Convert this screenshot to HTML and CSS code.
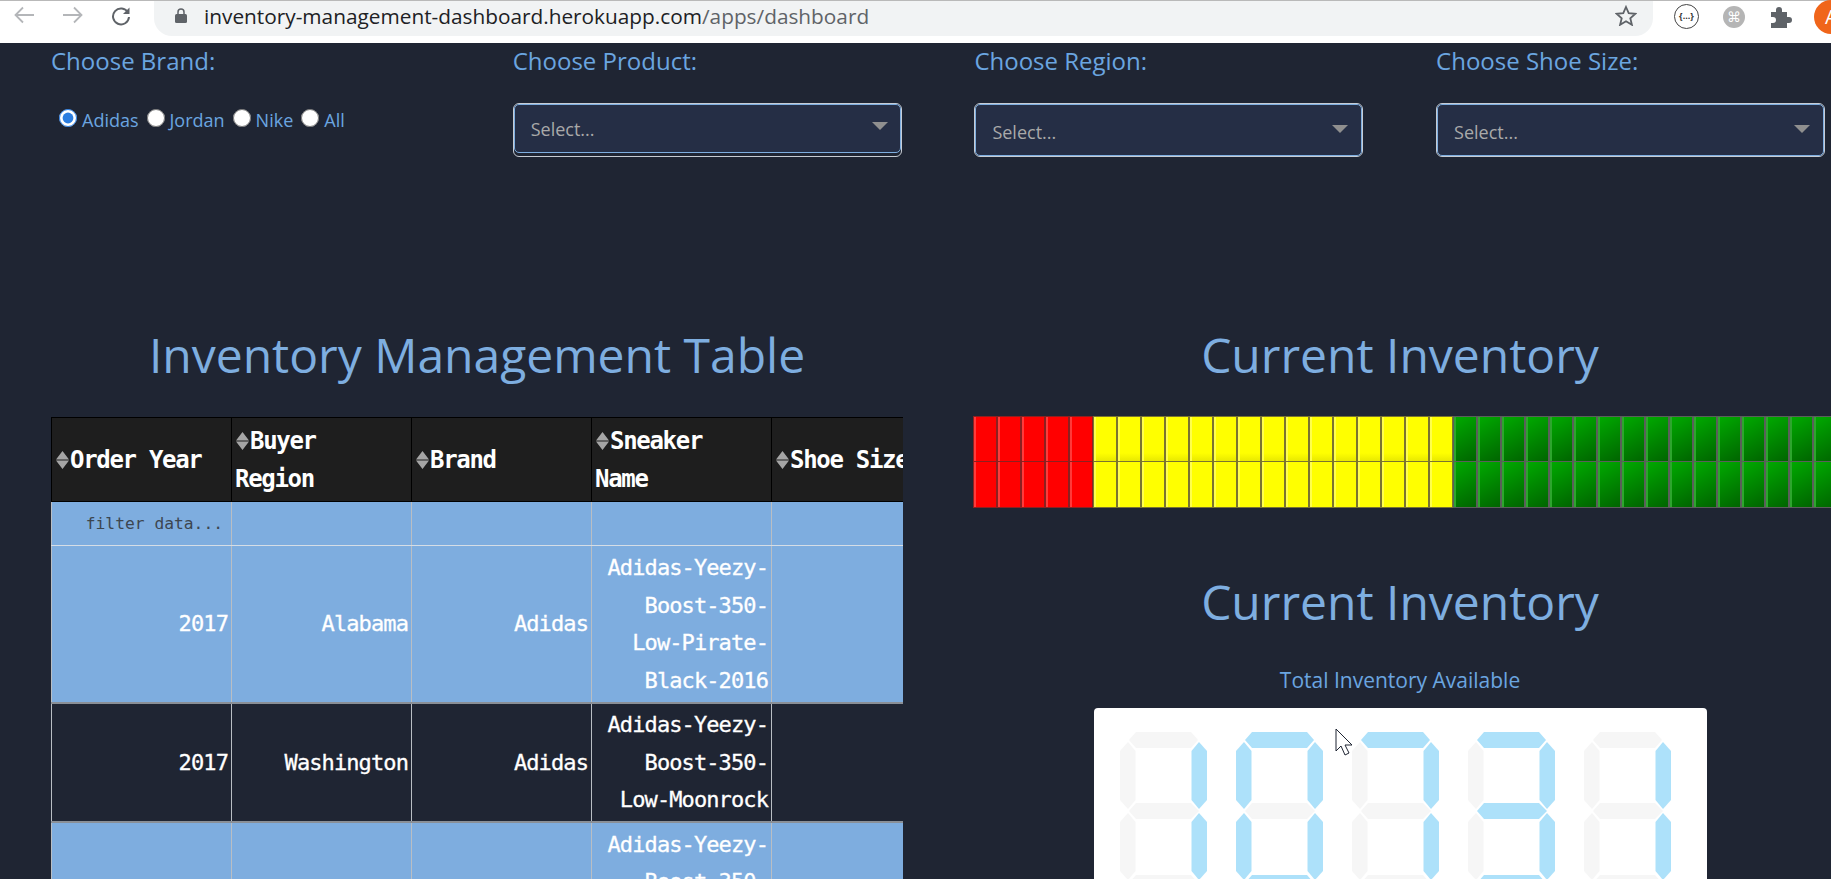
FILE: index.html
```html
<!DOCTYPE html>
<html lang="en">
<head>
  <meta charset="UTF-8">
  <meta name="viewport" content="width=device-width, initial-scale=1.0">
  <title>Inventory Management Dashboard</title>
  <link rel="stylesheet" href="styles.css">
</head>
<body>

<!-- browser toolbar -->
<div class="toolbar">
  <div class="nav-icons">
    <svg width="22" height="18" viewBox="0 0 22 18"><path d="M21 9H3M10 1.5 2.5 9l7.5 7.5" class="nav-off"/></svg>
    <svg width="22" height="18" viewBox="0 0 22 18"><path d="M1 9h18M12 1.5 19.500 9 12 16.500" class="nav-off"/></svg>
    <svg width="20" height="20" viewBox="0 0 20 20"><path d="M17 6.500A8 8 0 1 0 18 11" class="nav-on"/><path d="M18.500 1.500v6.500H12z" fill="#5f6368"/></svg>
  </div>
  <div class="omnibox">
    <svg class="lock" width="12" height="15" viewBox="0 0 12 15"><path d="M3 6V4a3 3 0 0 1 6 0v2" fill="none" stroke="#5f6368" stroke-width="1.500"/><rect y="6" width="12" height="9" rx="1.500" fill="#5f6368"/></svg>
    <span class="url">inventory-management-dashboard.herokuapp.com<span class="url-path">/apps/dashboard</span></span>
    <svg class="star" width="22" height="21" viewBox="0 0 22 21"><path d="M11 2l2.700 6.200 6.700.6-5.100 4.400 1.600 6.600L11 16.300 5.100 19.800l1.600-6.600L1.600 8.800l6.700-.6z" fill="none" stroke="#5f6368" stroke-width="1.800"/></svg>
  </div>
  <div class="ext-icons">
    <span class="ext-code">{...}</span>
    <span class="ext-cmd">⌘</span>
    <svg width="24" height="22" viewBox="0 0 24 22"><path d="M2 6h5V4a3 3 0 0 1 6 0v2h5v5h2a3 3 0 0 1 0 6h-2v5H2v-5h2a3 3 0 0 0 0-6H2z" fill="#5f6368"/></svg>
    <span class="avatar">A</span>
  </div>
</div>

<div class="page">
  <div class="filters">
    <div class="filter">
      <label class="filter-label">Choose Brand:</label>
      <div class="radios">
        <label><input type="radio" name="brand" checked>Adidas</label>
        <label><input type="radio" name="brand">Jordan</label>
        <label><input type="radio" name="brand">Nike</label>
        <label><input type="radio" name="brand">All</label>
      </div>
    </div>
    <div class="filter">
      <label class="filter-label">Choose Product:</label>
      <div class="select select-open">
        <div class="select-inner"><span>Select...</span><i class="caret"></i></div>
      </div>
    </div>
    <div class="filter">
      <label class="filter-label">Choose Region:</label>
      <div class="select">
        <div class="select-inner"><span>Select...</span><i class="caret"></i></div>
      </div>
    </div>
    <div class="filter">
      <label class="filter-label">Choose Shoe Size:</label>
      <div class="select">
        <div class="select-inner"><span>Select...</span><i class="caret"></i></div>
      </div>
    </div>
  </div>

  <div class="columns">
    <div class="col-left">
      <h1>Inventory Management Table</h1>
      <div class="table-wrap">
        <table>
          <thead>
            <tr>
              <th><svg class="sort" viewBox="0 0 13 18"><path d="M6.500 0 13 8.500H0zM0 9.500h13L6.500 18z"/></svg>Order Year</th>
              <th><svg class="sort" viewBox="0 0 13 18"><path d="M6.500 0 13 8.500H0zM0 9.500h13L6.500 18z"/></svg>Buyer Region</th>
              <th><svg class="sort" viewBox="0 0 13 18"><path d="M6.500 0 13 8.500H0zM0 9.500h13L6.500 18z"/></svg>Brand</th>
              <th><svg class="sort" viewBox="0 0 13 18"><path d="M6.500 0 13 8.500H0zM0 9.500h13L6.500 18z"/></svg>Sneaker Name</th>
              <th><svg class="sort" viewBox="0 0 13 18"><path d="M6.500 0 13 8.500H0zM0 9.500h13L6.500 18z"/></svg>Shoe Size</th>
            </tr>
          </thead>
          <tbody>
            <tr class="filter-row">
              <td><input type="text" placeholder="filter data..."></td>
              <td></td><td></td><td></td><td></td>
            </tr>
            <tr class="row-light">
              <td>2017</td><td>Alabama</td><td>Adidas</td><td>Adidas-Yeezy-Boost-350-Low-Pirate-Black-2016</td><td></td>
            </tr>
            <tr class="row-dark">
              <td>2017</td><td>Washington</td><td>Adidas</td><td>Adidas-Yeezy-Boost-350-Low-Moonrock</td><td></td>
            </tr>
            <tr class="row-light">
              <td></td><td></td><td></td><td>Adidas-Yeezy-Boost-350-Low-Moonrock</td><td></td>
            </tr>
          </tbody>
        </table>
      </div>
    </div>

    <div class="col-right">
      <h1>Current Inventory</h1>
      <div class="led-bar">
        <div class="led-row">
          <i class="led red"></i><i class="led red"></i><i class="led red"></i><i class="led red"></i><i class="led red"></i>
          <i class="led yellow"></i><i class="led yellow"></i><i class="led yellow"></i><i class="led yellow"></i><i class="led yellow"></i>
          <i class="led yellow"></i><i class="led yellow"></i><i class="led yellow"></i><i class="led yellow"></i><i class="led yellow"></i>
          <i class="led yellow"></i><i class="led yellow"></i><i class="led yellow"></i><i class="led yellow"></i><i class="led yellow"></i>
          <i class="led green"></i><i class="led green"></i><i class="led green"></i><i class="led green"></i><i class="led green"></i>
          <i class="led green"></i><i class="led green"></i><i class="led green"></i><i class="led green"></i><i class="led green"></i>
          <i class="led green"></i><i class="led green"></i><i class="led green"></i><i class="led green"></i><i class="led green"></i>
          <i class="led green"></i>
        </div>
        <div class="led-row">
          <i class="led red"></i><i class="led red"></i><i class="led red"></i><i class="led red"></i><i class="led red"></i>
          <i class="led yellow"></i><i class="led yellow"></i><i class="led yellow"></i><i class="led yellow"></i><i class="led yellow"></i>
          <i class="led yellow"></i><i class="led yellow"></i><i class="led yellow"></i><i class="led yellow"></i><i class="led yellow"></i>
          <i class="led yellow"></i><i class="led yellow"></i><i class="led yellow"></i><i class="led yellow"></i><i class="led yellow"></i>
          <i class="led green"></i><i class="led green"></i><i class="led green"></i><i class="led green"></i><i class="led green"></i>
          <i class="led green"></i><i class="led green"></i><i class="led green"></i><i class="led green"></i><i class="led green"></i>
          <i class="led green"></i><i class="led green"></i><i class="led green"></i><i class="led green"></i><i class="led green"></i>
          <i class="led green"></i>
        </div>
      </div>

      <h1 class="second-title">Current Inventory</h1>
      <div class="total-label">Total Inventory Available</div>
      <div class="display">
        <!-- 7 segments per digit: top, top-left, top-right, middle, bottom-left, bottom-right, bottom -->
        <svg class="digit" viewBox="0 0 87 159">
          <polygon points="16,0 71,0 78,8 71,16 16,16 9,8"/>
          <polygon points="8,10 15.500,19 15.500,68 8,77 0,68 0,19"/>
          <polygon class="on" points="79,10 87,19 87,68 79,77 71.500,68 71.500,19"/>
          <polygon points="16,71 71,71 79,79 71,87 16,87 9,79"/>
          <polygon points="8,81 15.500,90 15.500,139 8,148 0,139 0,90"/>
          <polygon class="on" points="79,81 87,90 87,139 79,148 71.500,139 71.500,90"/>
          <polygon points="16,143 71,143 78,151 71,159 16,159 9,151"/>
        </svg>
        <svg class="digit" viewBox="0 0 87 159">
          <polygon class="on" points="16,0 71,0 78,8 71,16 16,16 9,8"/>
          <polygon class="on" points="8,10 15.500,19 15.500,68 8,77 0,68 0,19"/>
          <polygon class="on" points="79,10 87,19 87,68 79,77 71.500,68 71.500,19"/>
          <polygon points="16,71 71,71 79,79 71,87 16,87 9,79"/>
          <polygon class="on" points="8,81 15.500,90 15.500,139 8,148 0,139 0,90"/>
          <polygon class="on" points="79,81 87,90 87,139 79,148 71.500,139 71.500,90"/>
          <polygon class="on" points="16,143 71,143 78,151 71,159 16,159 9,151"/>
        </svg>
        <svg class="digit" viewBox="0 0 87 159">
          <polygon class="on" points="16,0 71,0 78,8 71,16 16,16 9,8"/>
          <polygon points="8,10 15.500,19 15.500,68 8,77 0,68 0,19"/>
          <polygon class="on" points="79,10 87,19 87,68 79,77 71.500,68 71.500,19"/>
          <polygon points="16,71 71,71 79,79 71,87 16,87 9,79"/>
          <polygon points="8,81 15.500,90 15.500,139 8,148 0,139 0,90"/>
          <polygon class="on" points="79,81 87,90 87,139 79,148 71.500,139 71.500,90"/>
          <polygon points="16,143 71,143 78,151 71,159 16,159 9,151"/>
        </svg>
        <svg class="digit" viewBox="0 0 87 159">
          <polygon class="on" points="16,0 71,0 78,8 71,16 16,16 9,8"/>
          <polygon points="8,10 15.500,19 15.500,68 8,77 0,68 0,19"/>
          <polygon class="on" points="79,10 87,19 87,68 79,77 71.500,68 71.500,19"/>
          <polygon class="on" points="16,71 71,71 79,79 71,87 16,87 9,79"/>
          <polygon points="8,81 15.500,90 15.500,139 8,148 0,139 0,90"/>
          <polygon class="on" points="79,81 87,90 87,139 79,148 71.500,139 71.500,90"/>
          <polygon class="on" points="16,143 71,143 78,151 71,159 16,159 9,151"/>
        </svg>
        <svg class="digit" viewBox="0 0 87 159">
          <polygon points="16,0 71,0 78,8 71,16 16,16 9,8"/>
          <polygon points="8,10 15.500,19 15.500,68 8,77 0,68 0,19"/>
          <polygon class="on" points="79,10 87,19 87,68 79,77 71.500,68 71.500,19"/>
          <polygon points="16,71 71,71 79,79 71,87 16,87 9,79"/>
          <polygon points="8,81 15.500,90 15.500,139 8,148 0,139 0,90"/>
          <polygon class="on" points="79,81 87,90 87,139 79,148 71.500,139 71.500,90"/>
          <polygon points="16,143 71,143 78,151 71,159 16,159 9,151"/>
        </svg>
      </div>
    </div>
  </div>
</div>

<!-- mouse pointer caught in the screenshot -->
<svg class="pointer" width="19" height="28" viewBox="0 0 19 28"><path d="M1 1v22l5-5 4 9 4-2-4-8h7z" fill="#fff" stroke="#1f2533" stroke-width="1"/></svg>

</body>
</html>
```

FILE: styles.css
```css
* {
  box-sizing: border-box;
}

html, body {
  height: 100%;
}

body {
  margin: 0;
  overflow: hidden;
  background-color: #1f2533;
  font-family: "Open Sans", "Noto Sans", sans-serif;
  color: #7eaee0;
}

/* browser toolbar */
.toolbar {
  height: 43px;
  display: flex;
  background: #fff;
  border-top: 1px solid #b9b9b9;
}

.nav-icons {
  width: 154px;
  flex: none;
  display: flex;
  align-items: flex-start;
  gap: 27px;
  padding: 5px 0 0 13px;
}

.nav-icons svg {
  flex: none;
}

.nav-off {
  fill: none;
  stroke: #b4b6b9;
  stroke-width: 1.8;
}

.nav-on {
  fill: none;
  stroke: #5f6368;
  stroke-width: 2;
}

.omnibox {
  width: 1499px;
  height: 35px;
  flex: none;
  display: flex;
  align-items: center;
  background: #f1f3f4;
  border-radius: 0 0 18px 18px;
  padding: 0 16px 6px 21px;
}

.lock {
  flex: none;
  margin-right: 17px;
}

.url {
  flex: 1;
  font-size: 20.800px;
  color: #202124;
  white-space: nowrap;
}

.url-path {
  color: #5f6368;
}

.star {
  flex: none;
}

.ext-icons {
  flex: 1;
  display: flex;
  align-items: center;
  height: 31px;
  padding-left: 21px;
  gap: 24px;
}

.ext-code {
  width: 25px;
  height: 25px;
  flex: none;
  border: 1.500px solid #444;
  border-radius: 50%;
  font-size: 9px;
  font-weight: 700;
  line-height: 21px;
  text-align: center;
  color: #333;
}

.ext-cmd {
  width: 22px;
  height: 22px;
  flex: none;
  border-radius: 50%;
  background: #b5b5b5;
  color: #fff;
  font-family: "DejaVu Sans", sans-serif;
  font-size: 14px;
  line-height: 22px;
  text-align: center;
}

.ext-icons svg {
  flex: none;
}

.avatar {
  width: 34px;
  height: 34px;
  flex: none;
  margin: 0 0 0 -3px;
  border-radius: 50%;
  background: #f0651a;
  color: #fff;
  font-size: 20px;
  line-height: 34px;
  padding-left: 11px;
}

/* page */
.page {
  padding: 0 6px 0 51px;
}

.filters {
  display: grid;
  grid-template-columns: repeat(4, 389px);
  column-gap: 72.700px;
  height: 198px;
}

.filter-label {
  display: block;
  height: 60px;
  padding-top: 1px;
  font-size: 24px;
  line-height: 33px;
  color: #6ba5e0;
  white-space: nowrap;
}

.radios {
  display: flex;
  padding-left: 8px;
  font-size: 18px;
  line-height: 24px;
  margin-top: 5px;
  color: #6ba5e0;
}

.radios label {
  display: flex;
  align-items: flex-start;
  margin-right: 8px;
}

.radios input {
  width: 18px;
  height: 18px;
  margin: 1px 5px 0 0;
  accent-color: #2b7de0;
}

.select {
  height: 54px;
  border: 1px solid #c6ccd4;
  border-radius: 6px;
}

.select-open {
  padding: 0 0 3px;
}

.select-inner {
  height: 100%;
  display: flex;
  align-items: center;
  justify-content: space-between;
  padding: 4px 13px 0 16px;
  background: #252e45;
  border: 1px solid #7eaee0;
  border-radius: 5px;
  font-size: 18px;
  color: #a9a9a9;
}

.select-open .select-inner {
  padding: 0 12px 0 16px;
}

.caret {
  width: 0;
  height: 0;
  border-left: 8px solid transparent;
  border-right: 8px solid transparent;
  border-top: 8px solid #8f8f8f;
  margin-bottom: 6px;
}

.columns {
  display: grid;
  grid-template-columns: 852px 850px;
  column-gap: 72px;
}

h1 {
  margin: 0;
  font-size: 48px;
  font-weight: 400;
  line-height: 62px;
  text-align: center;
  color: #7eaee0;
}

.col-left h1,
.col-right h1 {
  padding-top: 83px;
  height: 176px;
}

/* table */
.table-wrap {
  width: 852px;
  overflow: hidden;
}

table {
  width: 900px;
  table-layout: fixed;
  border-collapse: collapse;
  font-family: "DejaVu Sans Mono", monospace;
  color: #fff;
}

th, td {
  width: 180px;
  border-left: 1px solid #b9bec4;
  border-right: 1px solid #b9bec4;
}

th {
  height: 84px;
  padding: 2px 14px 2px 3px;
  background: #1e1e1e;
  border: 1px solid #000;
  font-size: 24px;
  font-weight: 700;
  letter-spacing: -1.300px;
  line-height: 38px;
  text-align: left;
}

.sort {
  width: 13px;
  height: 18px;
  margin: 0 1px;
  vertical-align: -1px;
  fill: #a5a5a5;
}

td {
  padding: 3px 3px 3px 10px;
  font-size: 22px;
  letter-spacing: -0.900px;
  line-height: 37.500px;
  text-align: right;
  -webkit-text-stroke: 0.300px #fff;
}

.filter-row td {
  height: 44px;
  padding: 0;
  background: #7eaddf;
  border-bottom: 1px solid #d5dde6;
}

.filter-row input {
  width: 100%;
  height: 100%;
  padding: 0 8px 0 0;
  border: 0;
  background: none;
  font-family: "DejaVu Sans Mono", monospace;
  font-size: 16.300px;
  text-align: right;
  -webkit-text-stroke: 0;
}

.filter-row input::placeholder {
  color: #3c4650;
  opacity: 1;
}

.row-light td {
  background: #7eaddf;
  border-bottom: 2px solid #8a8f96;
}

.row-dark td {
  padding-top: 2px;
  padding-bottom: 2px;
  background: #1f2533;
  border-bottom: 2px solid #8a8f96;
}

/* led gauge */
.led-bar {
  width: 864px;
  margin-left: -1px;
}

.led-row {
  display: flex;
  gap: 2px;
  height: 45px;
}

.led {
  width: 22px;
  height: 100%;
  flex: none;
}

.red {
  background: #f00;
  box-shadow: inset 2px 0 0 #ff3a3a, 0 0 0 1px #8c2020;
}

.yellow {
  background: linear-gradient(#ff0 80%, #e6e600);
  box-shadow: inset 2px 0 0 #ffff4d, 0 0 0 1px #7a7430;
}

.green {
  background: linear-gradient(150deg, #00aa00, #006400);
  box-shadow: inset 2px 0 0 #2ea52e, 0 0 0 1px #5a5f5a;
}

.led-row:nth-child(2) .yellow {
  background: #ff0;
}

/* total display */
.col-right .second-title {
  height: auto;
  padding-top: 64px;
}

.total-label {
  margin-top: 33px;
  font-size: 21px;
  line-height: 28px;
  text-align: center;
  color: #6ba5e0;
}

.display {
  width: 613px;
  height: 220px;
  margin: 14px auto 0;
  display: flex;
  gap: 29px;
  padding: 24px 0 0 26px;
  background: #fff;
  border-radius: 4px;
}

.digit {
  width: 87px;
  height: 159px;
  flex: none;
}

.digit polygon {
  fill: #f6f6f6;
}

.digit polygon.on {
  fill: #ade1fa;
}

.pointer {
  position: absolute;
  left: 1335px;
  top: 728px;
}
```
